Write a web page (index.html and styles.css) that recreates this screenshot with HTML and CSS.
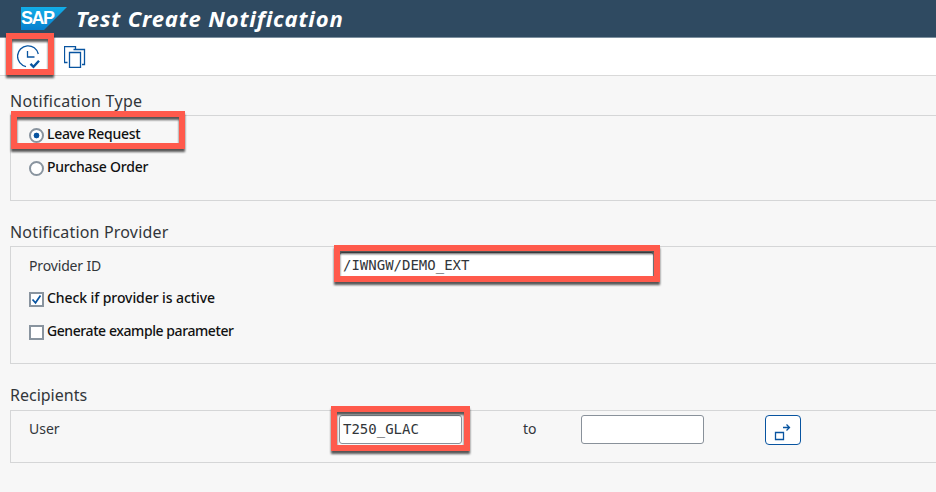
FILE: index.html
```html
<!DOCTYPE html>
<html lang="en">
<head>
<meta charset="utf-8">
<title>Test Create Notification</title>
<link rel="stylesheet" href="styles.css">
</head>
<body>
<header class="titlebar">
  <div class="logo"><svg width="47" height="23" viewBox="0 0 47 23"><defs><linearGradient id="g" x2="0" y2="1"><stop stop-color="#12aee8"/><stop offset="1" stop-color="#087fce"/></linearGradient></defs><path d="M0 0H46L23 23H0Z" fill="url(#g)"/></svg><span>SAP</span></div>
  <h1>Test Create Notification</h1>
</header>
<nav class="toolbar">
  <button class="tool" aria-label="Execute"><svg width="24" height="24" viewBox="0 0 24 24"><path d="M21.3 9A10.5 10.5 0 1 0 9 21.6M10.5 6V12H17.5" /><path class="tick" d="m13.5 18.8 3 3 5.5-6"/></svg></button>
  <button class="tool" aria-label="Variants"><svg width="22" height="22" viewBox="0 0 22 22"><path d="M3.5 16.5H.5V.5H11.5V3M9.5 3.5H20.5V18.5H18M5.5 6.5H16.5V21.3H5.5Z"/></svg></button>
  <i class="mark mark-tool"></i>
</nav>
<main>
  <section>
    <h2><span class="type">Notification Type</span></h2>
    <div class="group first">
      <label class="row"><i class="radio on"></i><span class="leave">Leave Request</span></label>
      <label class="row"><i class="radio"></i><span class="purchase">Purchase Order</span></label>
      <i class="mark mark-radio"></i>
    </div>
  </section>
  <section>
    <h2><span class="provider">Notification Provider</span></h2>
    <div class="group second">
      <div class="row"><span class="label provider-id">Provider ID</span><span class="field wide">/IWNGW/DEMO_EXT</span></div>
      <label class="row"><i class="check"><svg width="11" height="11" viewBox="0 0 11 11"><path d="m1.5 5.5 3 3.3L9.5 1.5"/></svg></i><span class="active">Check if provider is active</span></label>
      <label class="row"><i class="check"></i><span class="generate">Generate example parameter</span></label>
      <i class="mark mark-provider"></i>
    </div>
  </section>
  <section>
    <h2><span class="recipients">Recipients</span></h2>
    <div class="group third">
      <div class="row"><span class="label">User</span><span class="field">T250_GLAC</span><span class="to">to</span><span class="field"></span><button class="multi" aria-label="Multiple selection"><svg width="18" height="18" viewBox="0 0 18 18"><path d="M1.5 8.5H9.5V15.5H1.5ZM9 3.5H15.5M12.5.5 15.5 3.5 12.5 6.5"/></svg></button></div>
      <i class="mark mark-user"></i>
    </div>
  </section>
</main>
</body>
</html>
```
FILE: styles.css
```css
* { box-sizing: border-box; }
body { margin: 0; height: 492px; overflow: hidden; background: #f7f7f7; color: #32363a; font-family: "Noto Sans", sans-serif; }
.titlebar { display: flex; height: 38px; padding-left: 21px; background: #2f4a61; border-bottom: 1px solid #7c909f; }
.logo { position: relative; width: 55px; padding-top: 7px; }
.logo svg { display: block; }
.logo span { position: absolute; left: 0; top: 7px; font: bold 18px/23px "Liberation Sans", sans-serif; letter-spacing: -1.5px; color: #fff; }
h1 { margin: 0; font: italic 700 22px/36px "Noto Sans", sans-serif; letter-spacing: .83px; color: #fff; white-space: nowrap; }
.toolbar { position: relative; display: flex; gap: 23px; height: 38px; padding: 7px 0 0 17px; background: #fff; border-bottom: 1px solid #d9d9d9; }
.tool { display: block; height: 24px; padding: 0; border: 0; background: none; }
.tool svg, .multi svg, .check svg { display: block; fill: none; stroke: #0854a0; stroke-width: 1.3; }
.tool .tick { stroke-width: 2.4; }
main { padding-left: 10px; }
h2 { height: 24px; margin: 0; font-size: 16px; font-weight: 400; line-height: 20px; white-space: nowrap; }
section { padding-top: 15px; }
section + section { padding-top: 21px; }
.group { position: relative; border: 1px solid #d5d6d7; border-right: 0; }
.first { height: 86px; padding-top: 3px; }
.second { height: 118px; padding-top: 3px; }
.third { height: 53px; margin-top: 1px; padding-top: 2px; }
.row { display: flex; align-items: center; height: 33px; padding-left: 18px; font-size: 14px; line-height: 20px; white-space: nowrap; }
label.row { color: #111; font-weight: 500; }
label.row span { position: relative; top: -2px; }
.radio, .check { flex: none; width: 15px; height: 15px; margin-right: 3px; border: 2px solid #89949f; background: #fff; }
.radio { border-radius: 50%; }
.on { background: radial-gradient(circle, #0854a0 0 2.6px, #fff 3.2px); }
.check svg { stroke-width: 1.7; }
.type { letter-spacing: .3px; }
.provider { letter-spacing: .18px; }
.leave { letter-spacing: -.3px; }
.purchase { letter-spacing: -.23px; }
.active { letter-spacing: -.08px; }
.generate { letter-spacing: -.42px; }
.provider-id { letter-spacing: -.15px; }
.label { width: 310px; padding-bottom: 2px; }
.field { width: 123px; height: 29px; padding-left: 3px; border: 1px solid #89919a; border-radius: 3px; background: #fff; font: 14px/27px "DejaVu Sans Mono", monospace; }
.wide { width: 315px; line-height: 25px; }
.to { width: 119px; padding: 0 0 2px 61px; }
.multi { width: 36px; height: 30px; margin-left: 61px; padding: 6px 0 0 8px; border: 1.5px solid #0854a0; border-radius: 4px; background: #fff; }
.mark { position: absolute; border: 6px solid #ff5a4c; filter: drop-shadow(0 3px 1.3px rgba(0,0,0,.65)); }
.mark-tool { left: 6px; top: -5px; width: 48px; height: 42px; }
.mark-radio { left: 0; top: -5px; width: 174px; height: 38px; }
.mark-provider { left: 323px; top: -2px; width: 326px; height: 37px; }
.mark-user { left: 320px; top: -5px; width: 139px; height: 45px; }
```
